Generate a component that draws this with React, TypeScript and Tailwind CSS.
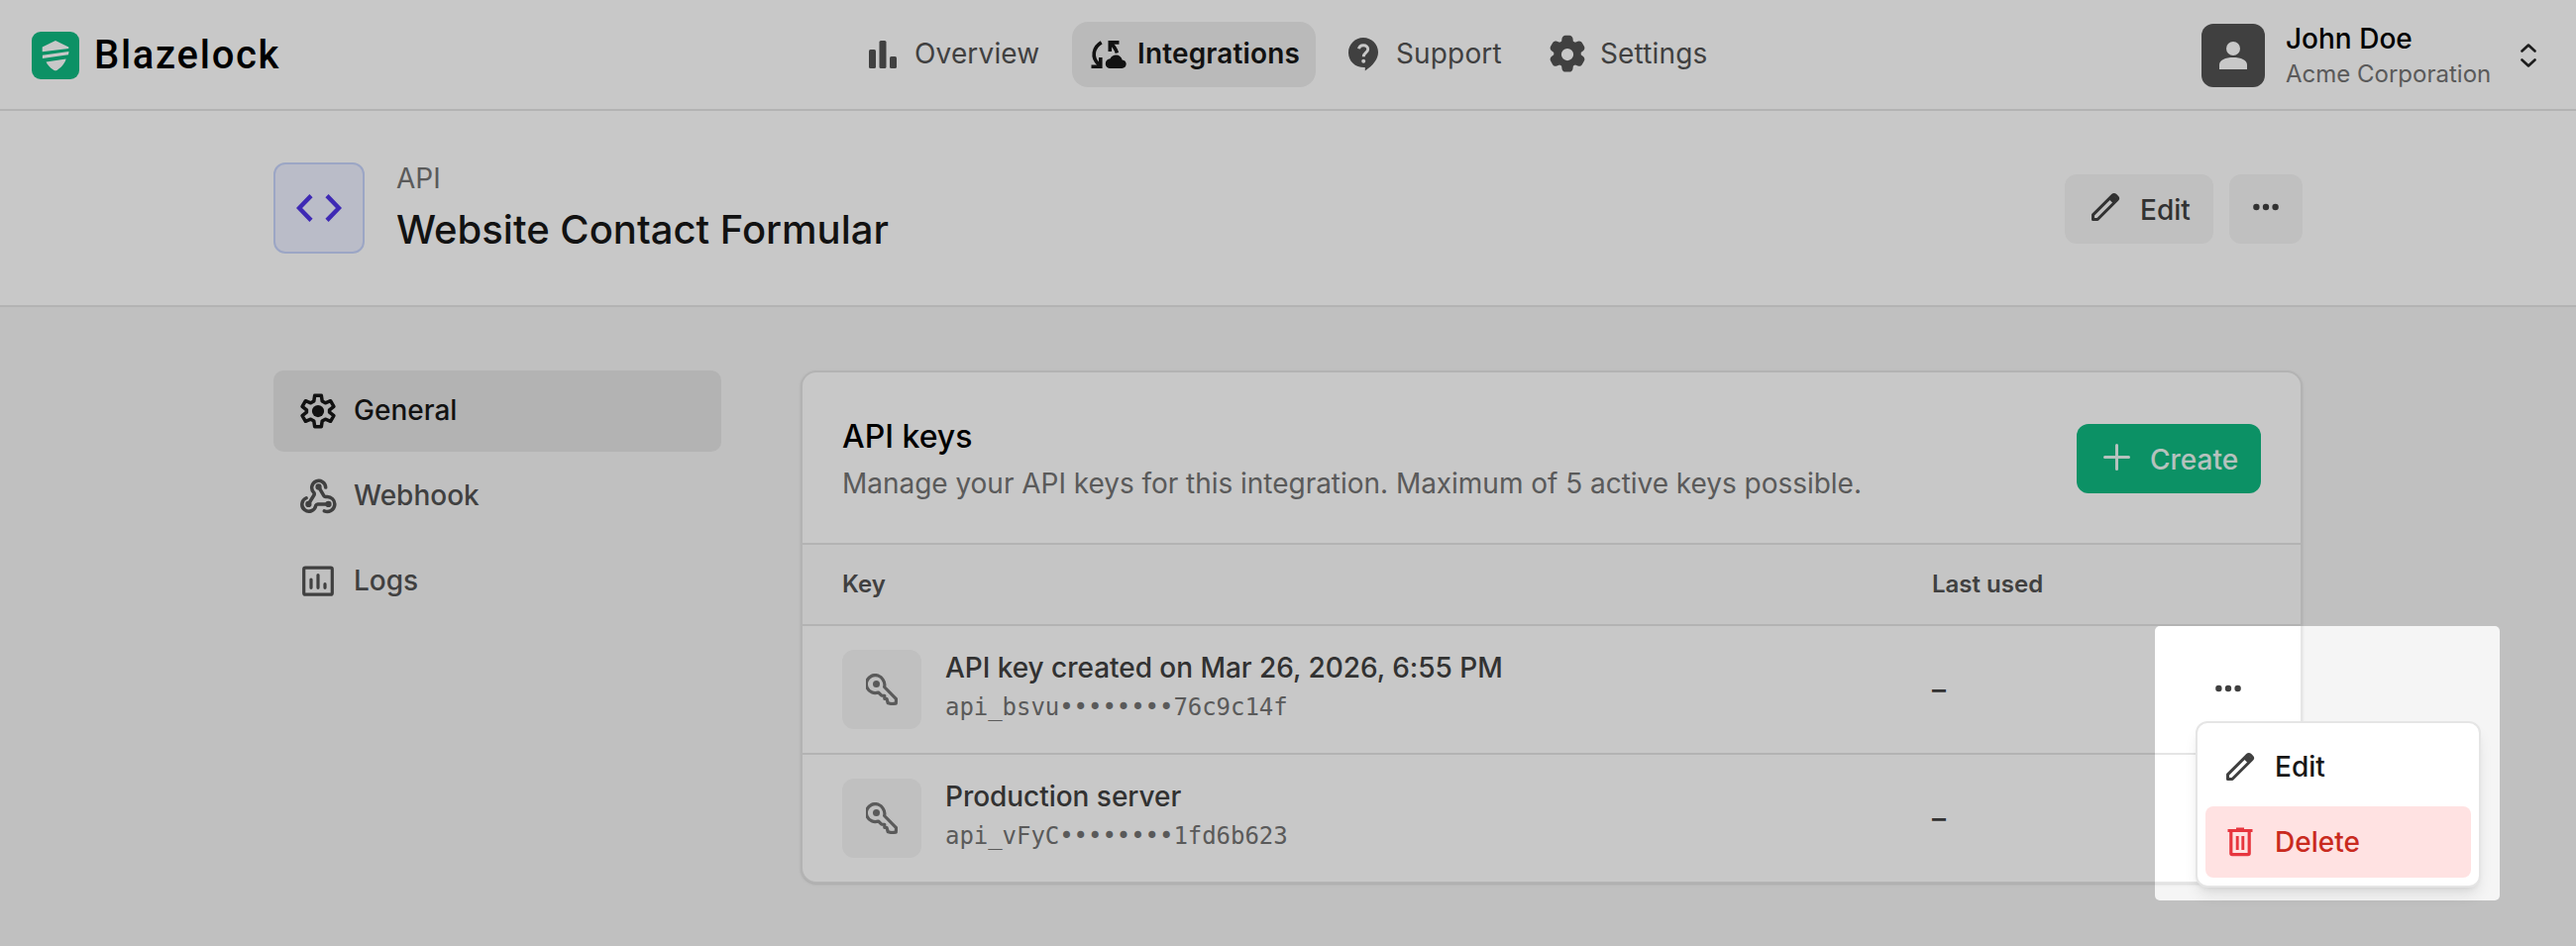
import type { ReactNode } from 'react';

type IconProps = { className?: string };

// Solid icons share a 24 unit grid
function Icon({ className, viewBox = '0 0 24 24', children }: IconProps & { viewBox?: string; children: ReactNode }) {
  return (
    <svg viewBox={viewBox} className={className} fill="currentColor" aria-hidden="true">
      {children}
    </svg>
  );
}

const GEAR =
  'M10.83 22c-.5 0-.93-.17-1.3-.5a1.95 1.95 0 0 1-.66-1.22l-.22-1.63a3.7 3.7 0 0 1-.61-.3 8.2 8.2 0 0 1-.56-.37l-1.5.62a1.93 1.93 0 0 1-1.39.07 1.95 1.95 0 0 1-1.09-.87l-1.17-2.05a1.9 1.9 0 0 1-.23-1.35c.1-.48.36-.88.75-1.2l1.33-1a2 2 0 0 1-.03-.34v-.68c0-.1.01-.22.03-.35l-1.33-1a2.06 2.06 0 0 1-.75-1.2 1.9 1.9 0 0 1 .23-1.35L3.5 5.23c.25-.43.61-.72 1.09-.87.47-.15.93-.13 1.39.07l1.5.62c.18-.13.37-.25.57-.37.2-.12.4-.22.6-.3l.22-1.63c.07-.48.29-.89.66-1.22.37-.33.8-.5 1.3-.5h2.34c.5 0 .93.17 1.3.5.37.33.59.74.66 1.22l.22 1.63c.22.08.42.18.61.3l.56.37 1.5-.62a1.93 1.93 0 0 1 1.39-.07c.47.15.84.44 1.09.87l1.17 2.05c.25.42.33.87.23 1.35-.1.48-.36.88-.75 1.2l-1.33 1c.02.13.03.25.03.35v.68c0 .1-.02.22-.05.34l1.33 1c.4.32.65.72.75 1.2.1.48.02.93-.23 1.35l-1.2 2.05c-.25.43-.61.72-1.09.87-.47.15-.93.13-1.39-.07l-1.45-.62c-.18.13-.37.25-.57.37-.2.12-.4.22-.6.3l-.22 1.63c-.07.48-.29.89-.66 1.22-.37.33-.8.5-1.3.5Z';

function LogoIcon() {
  return (
    <svg viewBox="0 0 48 48" className="size-12" aria-hidden="true">
      <rect width="48" height="48" rx="9" fill="#10b981" />
      <g fill="#ffffff">
        <path d="M10.7 20.2v-4.7L24 9l13.3 6.5v1.4z" />
        <path d="M10.9 23.8v3.1l26.1-3.6.5-3.3z" />
        <path d="M14.5 30.4l20.2-2.9c-1 3.500-3.500 7.500-8.900 11.200-1.200.8-2.400.8-3.600 0-4.200-2.900-6.500-5.700-7.700-8.300z" />
      </g>
    </svg>
  );
}

function BarsIcon({ className }: IconProps) {
  return (
    <Icon className={className} viewBox="0 0 42 42">
      <rect x="7" y="16" width="7" height="19" rx="1.600" />
      <rect x="17.500" y="7" width="7" height="28" rx="1.600" />
      <rect x="28" y="23" width="7" height="12" rx="1.600" />
    </Icon>
  );
}

function IntegrationIcon({ className }: IconProps) {
  return (
    <svg viewBox="0 0 42 42" className={className} aria-hidden="true">
      <g fill="none" stroke="currentColor" strokeWidth="3.600">
        <path d="M13.700 8.900C5.500 13.500 3 24 11.200 31.300" />
        <path d="M3.500 33.300h9.300v-9.300" />
        <path d="M31.500 8.900h-9.200v9.200" />
        <path d="M22.800 9.300c3.500 3.200 5.700 6.400 6.600 10.200" />
      </g>
      <path
        fill="currentColor"
        d="M23 35c-3.200 0-5.200-2.100-5.200-4.800 0-2.800 2.100-4.800 4.700-5 1.300-2.500 3.300-3.700 5.900-3.700 3.300 0 5.600 2.100 6.300 4.900 2.500.2 4 2 4 4.200 0 2.500-1.800 4.400-4.400 4.400z"
      />
    </svg>
  );
}

function SupportIcon({ className }: IconProps) {
  return (
    <Icon className={className} viewBox="0 0 42 42">
      <path d="M22.800 37.500v-3.400h-.8C12.700 34.100 6 27.600 6 19.200 6 10.700 12.700 4 21 4s15 6.500 15 14.700c0 7-5 13-13.200 18.800z" />
      <g className="text-white" fill="none" stroke="currentColor" strokeWidth="2.900">
        <path d="M16.500 15.200c.4-2.200 2.100-3.500 4.600-3.500 2.700 0 4.600 1.600 4.600 4 0 3.500-4.400 3.500-4.400 7.600" />
        <circle cx="21.200" cy="27.800" r="2" fill="currentColor" stroke="none" />
      </g>
    </Icon>
  );
}

function GearIcon({ className }: IconProps) {
  return (
    <Icon className={className}>
      <path fillRule="evenodd" d={GEAR + 'M12 15.500a3.500 3.500 0 1 0 0-7 3.500 3.500 0 0 0 0 7Z'} />
    </Icon>
  );
}

function GearOutlineIcon({ className }: IconProps) {
  return (
    <svg viewBox="0 0 24 24" className={className} aria-hidden="true">
      <path
        fill="none"
        stroke="currentColor"
        strokeWidth="2"
        strokeLinejoin="round"
        d="M10.100 3h3.800l.5 3.300 1.800 1 3-1.200 1.900 3.200-2.500 2v1.400l2.500 2-1.900 3.200-3-1.200-1.800 1-.5 3.300h-3.800l-.5-3.300-1.800-1-3 1.200-1.900-3.200 2.500-2v-1.400l-2.500-2 1.900-3.200 3 1.200 1.800-1z"
      />
      <circle cx="12" cy="12" r="3.500" fill="currentColor" />
    </svg>
  );
}

function WebhookIcon({ className }: IconProps) {
  return (
    <svg viewBox="0 0 24 24" className={className} fill="none" stroke="currentColor" strokeWidth="2" strokeLinecap="round" strokeLinejoin="round" aria-hidden="true">
      <path d="M18 16.500h-6.200c-.5 0-.9.400-1.100.9A4 4 0 1 1 5.200 13" />
      <path d="m6.500 16.500 3.200-5.200c.300-.5.100-1.100-.2-1.500a4 4 0 1 1 6.900-2.900" />
      <path d="m12.300 6.500 3.100 5.300c.300.500.800.600 1.300.5a4.300 4.300 0 1 1-1.100 8.200" />
      <circle cx="6.500" cy="16.500" r=".8" />
      <circle cx="12.300" cy="6.500" r=".8" />
      <circle cx="18" cy="16.500" r=".8" />
    </svg>
  );
}

function LogsIcon({ className }: IconProps) {
  return (
    <svg viewBox="0 0 42 42" className={className} fill="none" stroke="currentColor" strokeWidth="3.200" strokeLinecap="round" aria-hidden="true">
      <rect x="6.700" y="7.200" width="28.600" height="27" rx="1.500" />
      <path d="M14 19v8.300M21 14.500v12.800M28 23.700v3.600" />
    </svg>
  );
}

function PencilIcon({ className }: IconProps) {
  return (
    <svg viewBox="0 0 30 30" className={className} aria-hidden="true">
      <path
        fill="none"
        stroke="currentColor"
        strokeWidth="3"
        strokeLinejoin="round"
        d="M2.500 27.500v-4.600L22.300 3.100c.9-.9 2-.9 2.900 0l1.700 1.700c.9.900.9 2 0 2.900L7.100 27.500z"
      />
      <path fill="currentColor" d="M18.500 7 23 2.500l4.500 4.500-4.500 4.500z" />
    </svg>
  );
}

function KeyIcon({ className }: IconProps) {
  return (
    <svg viewBox="0 0 32 32" className={className} fill="none" stroke="currentColor" strokeWidth="3.200" strokeLinejoin="round" aria-hidden="true">
      <path d="M17.300 6.300A9 9 0 1 0 12.500 19l3.300 3.200 3 .1v3l2.200.2 1.200 4.200 3.600.9 4.500-.400.200-4.600L18.600 13.500a9 9 0 0 0-1.300-7.200z" />
      <circle cx="10.500" cy="10.500" r="3.500" fill="currentColor" stroke="none" />
    </svg>
  );
}

function TrashIcon({ className }: IconProps) {
  return (
    <svg viewBox="0 0 26 30" className={className} fill="none" stroke="currentColor" strokeWidth="3.200" aria-hidden="true">
      <path d="M.5 3.500h25M9 2h8" />
      <path d="M3.800 4v22.500c0 .8.500 1.200 1.200 1.200h16c.7 0 1.200-.4 1.200-1.200V4" />
      <path strokeWidth="2.900" d="M10.200 9v14M15.800 9v14" />
    </svg>
  );
}

function DotsIcon() {
  return (
    <Icon className="h-2 w-[26px]" viewBox="0 0 26 8">
      <circle cx="3.400" cy="4" r="3.200" />
      <circle cx="13" cy="4" r="3.200" />
      <circle cx="22.600" cy="4" r="3.200" />
    </Icon>
  );
}

const navItems = [
  { label: 'Overview', icon: BarsIcon, box: 'w-[212px] pl-4 gap-[11px]' },
  { label: 'Integrations', icon: IntegrationIcon, box: 'w-[246px] pl-4 gap-2', active: true },
  { label: 'Support', icon: SupportIcon, box: 'w-[189px] pl-[11px] gap-3' },
  { label: 'Settings', icon: GearIcon, box: 'w-[197px] pl-3 gap-3' },
];

const sideItems = [
  { label: 'General', icon: GearOutlineIcon, active: true },
  { label: 'Webhook', icon: WebhookIcon },
  { label: 'Logs', icon: LogsIcon },
];

const apiKeys = [
  { name: 'API key created on Mar 26, 2026, 6:55 PM', masked: 'api_bsvu••••••••76c9c14f', lastUsed: '–' },
  { name: 'Production server', masked: 'api_vFyC••••••••1fd6b623', lastUsed: '–' },
];

function TopBar() {
  return (
    <header className="flex h-28 items-center border-b-2 border-[#e5e5e5] bg-white">
      <div className="flex w-[854px] items-center gap-[15px] pt-0.5 pl-8">
        <LogoIcon />
        <span className="font-['Roboto',sans-serif] text-[40px] leading-none font-medium tracking-[1.7px] text-black">Blazelock</span>
      </div>
      <nav className="flex gap-4">
        {navItems.map(({ label, icon: NavIcon, box, active }) => (
          <a
            key={label}
            className={`flex h-[66px] items-center rounded-2xl text-[28px] tracking-[0.15px] whitespace-nowrap ${box} ${
              active ? 'bg-[#eeeeee] font-semibold text-neutral-900' : 'text-[#525252]'
            }`}
          >
            <NavIcon className="size-[42px] shrink-0" />
            <span className="pb-0.5">{label}</span>
          </a>
        ))}
      </nav>
      <div className="ml-auto flex items-center pt-0.5 pr-10">
        <div className="flex size-16 items-center justify-center rounded-xl bg-[#525252]">
          <Icon className="size-7 text-white" viewBox="0 0 28 28">
            <circle cx="14" cy="7" r="7" />
            <path d="M0 28v-4.500C0 18.500 6 16 14 16s14 2.500 14 7.500V28z" />
          </Icon>
        </div>
        <div className="ml-[21px] w-[237px] whitespace-nowrap">
          <p className="text-[28px] leading-9 font-medium text-black">John Doe</p>
          <p className="pt-0.5 text-2xl leading-8 text-[#737373]">Acme Corporation</p>
        </div>
        <svg viewBox="0 0 16 24" className="h-6 w-4" fill="none" stroke="#262626" strokeWidth="2.600" strokeLinecap="round" strokeLinejoin="round">
          <path d="M1.500 7.500 8 1.500l6.500 6M1.500 16.500l6.500 6 6.500-6" />
        </svg>
      </div>
    </header>
  );
}

function PageHeading() {
  return (
    <section className="h-[198px] border-b-2 border-[#e5e5e5] bg-white">
      <div className="mx-auto flex w-[2048px] pt-[52px]">
        <div className="flex size-[92px] items-center justify-center rounded-xl border-2 border-[#c7d4fb] bg-[#edf0ff]">
          <svg viewBox="0 0 46 28" className="h-7 w-[46px]" fill="none" stroke="#4f35e6" strokeWidth="4.400">
            <path d="M15 1.600 3 14l12 12.400M31 1.600 43 14 31 26.400" />
          </svg>
        </div>
        <div className="ml-8">
          <p className="text-[28px] leading-8 text-[#737373]">API</p>
          <h1 className="mt-2.5 text-[40px] leading-[52px] font-medium text-neutral-900">Website Contact Formular</h1>
        </div>
        <div className="mt-3 ml-auto flex gap-4">
          <button className="flex h-[70px] w-[150px] items-center rounded-xl bg-neutral-100 pl-[26px] text-[28px] font-medium text-[#404040]">
            <PencilIcon className="mr-5 mb-1 size-[30px]" />
            <span className="pt-0.5">Edit</span>
          </button>
          <button className="flex h-[70px] w-[74px] items-center justify-center rounded-xl bg-neutral-100 pb-1 text-[#404040]">
            <DotsIcon />
          </button>
        </div>
      </div>
    </section>
  );
}

function Sidebar() {
  return (
    <aside className="flex w-[452px] flex-col gap-1">
      {sideItems.map(({ label, icon: SideIcon, active }) => (
        <a
          key={label}
          className={`flex h-[82px] items-center gap-[15px] rounded-[10px] pl-6 text-[28px] font-medium ${
            active ? 'bg-neutral-200 text-neutral-900' : 'text-[#525252]'
          }`}
        >
          <SideIcon className="size-[42px]" />
          <span className="pb-0.5">{label}</span>
        </a>
      ))}
    </aside>
  );
}

function KeysCard() {
  return (
    <section className="ml-20 flex-1 overflow-hidden rounded-2xl border-2 border-[#e5e5e5] bg-white shadow-sm">
      <div className="flex h-[174px] items-start justify-between border-b-2 border-[#e5e5e5] pr-10 pl-10">
        <div className="pt-[45px]">
          <h2 className="text-[32px] leading-10 font-medium text-black">API keys</h2>
          <p className="mt-[7px] text-[28px] leading-10 tracking-[-0.03px] text-[#737373]">
            Manage your API keys for this integration. Maximum of 5 active keys possible.
          </p>
        </div>
        <button className="mt-[52px] flex h-[70px] w-[186px] items-center rounded-xl bg-[#10b981] pl-[27px] text-[28px] font-medium text-white/90">
          <svg viewBox="0 0 27 27" className="mr-5 mb-1 size-[27px]" stroke="currentColor" strokeWidth="3" strokeLinecap="round">
            <path d="M13.500 1.500v24M1.500 13.500h24" />
          </svg>
          <span className="pt-0.5">Create</span>
        </button>
      </div>
      <div className="flex h-[82px] items-center border-b-2 border-[#e5e5e5] bg-[#fbfbfb] pl-10 text-2xl font-semibold text-[#525252]">
        <span className="w-[1100px]">Key</span>
        <span>Last used</span>
      </div>
      {apiKeys.map((key) => (
        <div key={key.masked} className="flex h-[130px] items-start border-b-2 border-[#e5e5e5] pt-6 pl-10 last:h-32 last:border-b-0">
          <div className="flex size-20 items-center justify-center rounded-xl bg-neutral-100 text-[#737373]">
            <KeyIcon className="size-8" />
          </div>
          <div className="ml-6 w-[996px]">
            <p className="text-[28px] leading-9 font-medium tracking-[-0.04px] text-[#404040]">{key.name}</p>
            <p className="mt-1.5 font-['DejaVu_Sans_Mono',monospace] text-2xl leading-8 tracking-[-0.05px] text-[#737373]">{key.masked}</p>
          </div>
          <span className="self-center pb-6 text-[28px] font-medium text-[#404040]">{key.lastUsed}</span>
        </div>
      ))}
    </section>
  );
}

// Lit area around the open row menu; its outer shadow dims the rest of the page
function Spotlight() {
  return (
    <div className="absolute top-[632px] left-[2175px] h-[277px] w-[348px] rounded-[5px] shadow-[0_0_0_3000px_rgba(0,0,0,0.216)]">
      <button className="absolute top-[59px] left-[61px] text-[#404040]">
        <DotsIcon />
      </button>
      <div className="absolute top-24 left-[41px] h-[168px] w-72 rounded-xl border-2 border-[#e5e5e5] bg-white px-2 pt-2 text-[28px] font-medium shadow-lg">
        <div className="flex h-[72px] items-center pl-5 text-neutral-900">
          <PencilIcon className="mr-5 size-[30px] text-[#404040]" />
          Edit
        </div>
        <div className="mt-1 flex h-[72px] items-center rounded-lg bg-red-100 pl-[22px] text-[#c92a1e]">
          <TrashIcon className="mr-[22px] h-[30px] w-[26px] text-[#e7363f]" />
          Delete
        </div>
      </div>
    </div>
  );
}

export default function App() {
  return (
    <div className="relative h-[955px] w-[2600px] overflow-hidden bg-neutral-100 font-['Inter',sans-serif]">
      <TopBar />
      <PageHeading />
      <main className="mx-auto flex w-[2048px] items-start pt-16">
        <Sidebar />
        <KeysCard />
      </main>
      <Spotlight />
    </div>
  );
}
